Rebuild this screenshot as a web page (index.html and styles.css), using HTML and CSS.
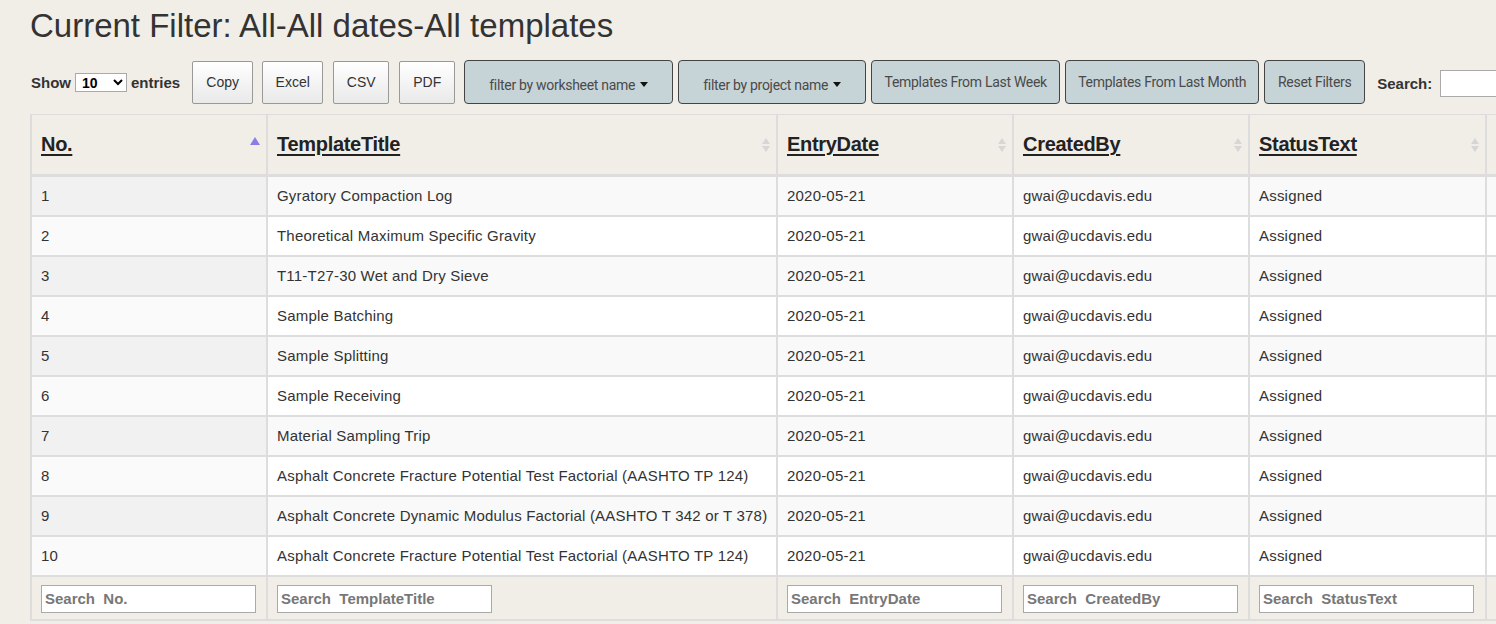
FILE: index.html
```html
<!DOCTYPE html>
<html>
<head>
<meta charset="utf-8">
<link rel="stylesheet" href="styles.css">
</head>
<body>
<div class="page">
  <h1 class="title">Current Filter: All-All dates-All templates</h1>
  <div class="controls">
    <label class="length">Show <select class="length-select"><option>10</option></select> entries</label>
    <div class="export">
      <button class="btn w61 first">Copy</button>
      <button class="btn w61">Excel</button>
      <button class="btn w56">CSV</button>
      <button class="btn w56">PDF</button>
    </div>
    <div class="filters">
      <button class="fbtn f209 drop">filter by worksheet name<span class="caret"></span></button>
      <button class="fbtn f188 drop">filter by project name<span class="caret"></span></button>
      <button class="fbtn f189">Templates From Last Week</button>
      <button class="fbtn f194">Templates From Last Month</button>
      <button class="fbtn f101">Reset Filters</button>
    </div>
    <label class="search">Search: <input class="search-input" type="text"></label>
  </div>
  <div class="table-wrap">
    <table class="grid">
      <colgroup>
        <col class="c1"><col class="c2"><col class="c3"><col class="c4"><col class="c5"><col class="c6">
      </colgroup>
      <thead>
        <tr>
          <th><span class="h">No.</span><span class="sort-asc"></span></th>
          <th><span class="h">TemplateTitle</span><span class="sort"></span></th>
          <th><span class="h">EntryDate</span><span class="sort"></span></th>
          <th><span class="h">CreatedBy</span><span class="sort"></span></th>
          <th><span class="h">StatusText</span><span class="sort"></span></th>
          <th></th>
        </tr>
      </thead>
      <tbody>
        <tr class="odd"><td>1</td><td>Gyratory Compaction Log</td><td>2020-05-21</td><td>gwai@ucdavis.edu</td><td>Assigned</td><td></td></tr>
        <tr class="even"><td>2</td><td>Theoretical Maximum Specific Gravity</td><td>2020-05-21</td><td>gwai@ucdavis.edu</td><td>Assigned</td><td></td></tr>
        <tr class="odd"><td>3</td><td>T11-T27-30 Wet and Dry Sieve</td><td>2020-05-21</td><td>gwai@ucdavis.edu</td><td>Assigned</td><td></td></tr>
        <tr class="even"><td>4</td><td>Sample Batching</td><td>2020-05-21</td><td>gwai@ucdavis.edu</td><td>Assigned</td><td></td></tr>
        <tr class="odd"><td>5</td><td>Sample Splitting</td><td>2020-05-21</td><td>gwai@ucdavis.edu</td><td>Assigned</td><td></td></tr>
        <tr class="even"><td>6</td><td>Sample Receiving</td><td>2020-05-21</td><td>gwai@ucdavis.edu</td><td>Assigned</td><td></td></tr>
        <tr class="odd"><td>7</td><td>Material Sampling Trip</td><td>2020-05-21</td><td>gwai@ucdavis.edu</td><td>Assigned</td><td></td></tr>
        <tr class="even"><td>8</td><td>Asphalt Concrete Fracture Potential Test Factorial (AASHTO TP 124)</td><td>2020-05-21</td><td>gwai@ucdavis.edu</td><td>Assigned</td><td></td></tr>
        <tr class="odd"><td>9</td><td>Asphalt Concrete Dynamic Modulus Factorial (AASHTO T 342 or T 378)</td><td>2020-05-21</td><td>gwai@ucdavis.edu</td><td>Assigned</td><td></td></tr>
        <tr class="even"><td>10</td><td>Asphalt Concrete Fracture Potential Test Factorial (AASHTO TP 124)</td><td>2020-05-21</td><td>gwai@ucdavis.edu</td><td>Assigned</td><td></td></tr>
      </tbody>
      <tfoot>
        <tr>
          <th><input class="col-search" type="text" placeholder="Search &nbsp;No."></th>
          <th><input class="col-search" type="text" placeholder="Search &nbsp;TemplateTitle"></th>
          <th><input class="col-search" type="text" placeholder="Search &nbsp;EntryDate"></th>
          <th><input class="col-search" type="text" placeholder="Search &nbsp;CreatedBy"></th>
          <th><input class="col-search" type="text" placeholder="Search &nbsp;StatusText"></th>
          <th></th>
        </tr>
      </tfoot>
    </table>
  </div>
</div>
</body>
</html>
```
FILE: styles.css
```css
html, body {
  margin: 0;
  padding: 0;
  overflow: hidden;
  background: #f1eee8;
}
body {
  font-family: "Liberation Sans", Arial, sans-serif;
  color: #333;
}
.page {
  padding-left: 30px;
  width: 1700px;
}
.title {
  margin: 8px 0 0 0;
  font-size: 33px;
  font-weight: normal;
  line-height: 36px;
  height: 36px;
  color: #333;
}
.controls {
  display: flex;
  align-items: center;
  margin-top: 16px;
  height: 44px;
}
.length {
  font-size: 15px;
  font-weight: bold;
  color: #333;
  margin-left: 1px;
  display: flex;
  align-items: center;
  gap: 4px;
}
.length-select {
  width: 52px;
  height: 19px;
  font-family: "Liberation Sans", Arial, sans-serif;
  font-size: 14px;
  font-weight: bold;
  border: 1px solid #aaa;
  background: #fff;
  padding: 0 2px;
  border-radius: 0;
}
.export {
  display: flex;
  gap: 10px;
  margin-left: 12px;
}
.btn {
  height: 43px;
  border: 1px solid #999;
  border-radius: 2px;
  background: linear-gradient(to bottom, #ffffff 0%, #e9e9e9 100%);
  font-family: "Liberation Sans", Arial, sans-serif;
  font-size: 14px;
  color: #333;
  padding: 0;
}
.btn.first { margin-right: -1px; }
.w61 { width: 61px; }
.w56 { width: 56px; }
.filters {
  display: flex;
  gap: 5px;
  margin-left: 9px;
}
.fbtn {
  height: 44px;
  background: #c6d4d8;
  border: 1px solid #444;
  border-radius: 4px;
  font-family: Roboto, "Liberation Sans", sans-serif;
  font-size: 14px;
  color: #4a4a4a;
  padding: 0;
  letter-spacing: -0.3px;
  padding-bottom: 1px;
}
.fbtn.drop {
  padding-top: 5px;
  padding-bottom: 0;
}
.caret {
  display: inline-block;
  width: 0;
  height: 0;
  margin-left: 5px;
  vertical-align: 3px;
  border-top: 5px solid #111;
  border-left: 4px solid transparent;
  border-right: 4px solid transparent;
}
.f209 { width: 209px; }
.f188 { width: 188px; }
.f189 { width: 189px; }
.f194 { width: 194px; }
.f101 { width: 101px; }
.search {
  margin-left: 12px;
  font-size: 15px;
  font-weight: bold;
  color: #333;
  display: flex;
  align-items: center;
  gap: 8px;
  padding-top: 2px;
}
.search-input {
  width: 200px;
  height: 27px;
  box-sizing: border-box;
  border: 1px solid #aaa;
  background: #fff;
}
.table-wrap {
  margin-top: 10px;
}
.grid {
  border-collapse: collapse;
  table-layout: fixed;
  width: 1656px;
}
.c1 { width: 236px; }
.c2 { width: 510px; }
.c3 { width: 236px; }
.c4 { width: 236px; }
.c5 { width: 237px; }
.c6 { width: 201px; }
.grid th, .grid td {
  border: 2px solid #dddddd;
  text-align: left;
}
.grid thead th {
  border-top: 1px solid #dddddd;
  border-bottom: 3px solid #dddddd;
  height: 59px;
  padding: 0 9px;
  position: relative;
  vertical-align: middle;
  background: #f1eee8;
}
.h {
  font-size: 20px;
  font-weight: bold;
  color: #222;
  text-decoration: underline;
  text-underline-offset: 3px;
  letter-spacing: -0.3px;
}
.sort-asc {
  position: absolute;
  right: 6px;
  top: 22px;
  width: 0;
  height: 0;
  border-bottom: 8px solid #8a7ee6;
  border-left: 5px solid transparent;
  border-right: 5px solid transparent;
}
.sort {
  position: absolute;
  right: 6px;
  top: 23px;
  width: 8px;
  height: 14px;
}
.sort::before, .sort::after {
  content: "";
  position: absolute;
  left: 0;
  width: 0;
  height: 0;
  border-left: 4px solid transparent;
  border-right: 4px solid transparent;
}
.sort::before {
  top: 0;
  border-bottom: 6px solid #d6d6d6;
}
.sort::after {
  bottom: 0;
  border-top: 6px solid #d6d6d6;
}
.grid td {
  padding: 10px 9px;
  line-height: 18px;
  font-size: 15px;
  letter-spacing: 0.2px;
  color: #333;
  white-space: nowrap;
  overflow: hidden;
}
.odd td { background: #f9f9f9; }
.even td { background: #ffffff; }
.odd td:first-child { background: #f1f1f1; }
.even td:first-child { background: #fafafa; }
.grid tfoot th {
  padding: 7px 9px 6px;
  height: 29px;
  background: #f1eee8;
}
.col-search {
  box-sizing: border-box;
  width: 215px;
  height: 28px;
  border: 1px solid #aaa;
  background: #fff;
  padding: 0 3px;
  font-family: "Liberation Sans", Arial, sans-serif;
  font-size: 15px;
  font-weight: bold;
  color: #777;
  display: block;
}
.col-search::placeholder {
  color: #777;
  opacity: 1;
}
```
